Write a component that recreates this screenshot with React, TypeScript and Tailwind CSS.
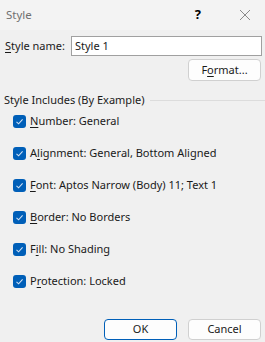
import React from "react";

const font = { fontFamily: '"Noto Sans", "Segoe UI", sans-serif' };

function Check() {
  return (
    <span className="w-[13px] h-[13px] rounded-[3px] bg-[#005fb8] flex items-center justify-center shrink-0">
      <svg width="9" height="9" viewBox="0 0 9 9">
        <path d="M1.5 4.8 L3.6 6.8 L7.6 2.4" fill="none" stroke="#cfe0f3" strokeWidth="1.1" />
      </svg>
    </span>
  );
}

function Row({ u, rest, pre = "" }: { u: string; rest: string; pre?: string }) {
  return (
    <div className="h-[32px] flex items-center gap-[4px] pl-[13px]">
      <Check />
      <span>
        {pre}
        <span className="underline underline-offset-2">{u}</span>
        {rest}
      </span>
    </div>
  );
}

export default function App() {
  return (
    <div className="w-[265px] h-[342px] bg-[#f0f0f0] text-[11px] text-[#1a1a1a] flex flex-col" style={font}>
      <div className="h-[30px] shrink-0 bg-[#f3f3f3] flex items-center pl-[6px] pr-[14px]">
        <span className="text-[#707070] text-[11.5px]">Style</span>
        <span className="ml-auto mr-[38px] text-[13px] font-bold text-black">?</span>
        <svg width="12" height="12" viewBox="0 0 12 12">
          <path d="M1 1 L11 11 M11 1 L1 11" stroke="#8a8a8a" strokeWidth="1" />
        </svg>
      </div>
      <div className="flex items-center mt-[6px] pl-[5px] pr-[3px]">
        <span className="w-[66px]">
          <span className="underline underline-offset-2">S</span>tyle name:
        </span>
        <div className="flex-1 h-[20px] border border-[#a0a0a0] bg-white flex items-center pl-[3px]">Style 1</div>
      </div>
      <div className="flex justify-end pr-[4px] mt-[3px]">
        <div className="w-[73px] h-[22px] rounded-[4px] border border-[#d0d0d0] bg-[#fdfdfd] flex items-center justify-center">
          F<span className="underline underline-offset-2">o</span>rmat...
        </div>
      </div>
      <div className="flex items-center pl-[4px] mt-[14px] h-[10px]">
        <span>Style Includes (By Example)</span>
        <div className="flex-1 h-px bg-[#dcdcdc] ml-[6px]" />
      </div>
      <div>
        <Row u="N" rest="umber: General" />
        <Row pre="A" u="l" rest="ignment: General, Bottom Aligned" />
        <Row u="F" rest="ont: Aptos Narrow (Body) 11; Text 1" />
        <Row u="B" rest="order: No Borders" />
        <Row pre="F" u="i" rest="ll: No Shading" />
        <Row pre="P" u="r" rest="otection: Locked" />
      </div>
      <div className="flex justify-end gap-[11px] pr-[4px] mt-[22px]">
        <div className="w-[73px] h-[21px] rounded-[4px] border border-[#005fb8] bg-[#fdfdfd] flex items-center justify-center">OK</div>
        <div className="w-[73px] h-[21px] rounded-[4px] border border-[#d0d0d0] bg-[#fdfdfd] flex items-center justify-center">Cancel</div>
      </div>
    </div>
  );
}
